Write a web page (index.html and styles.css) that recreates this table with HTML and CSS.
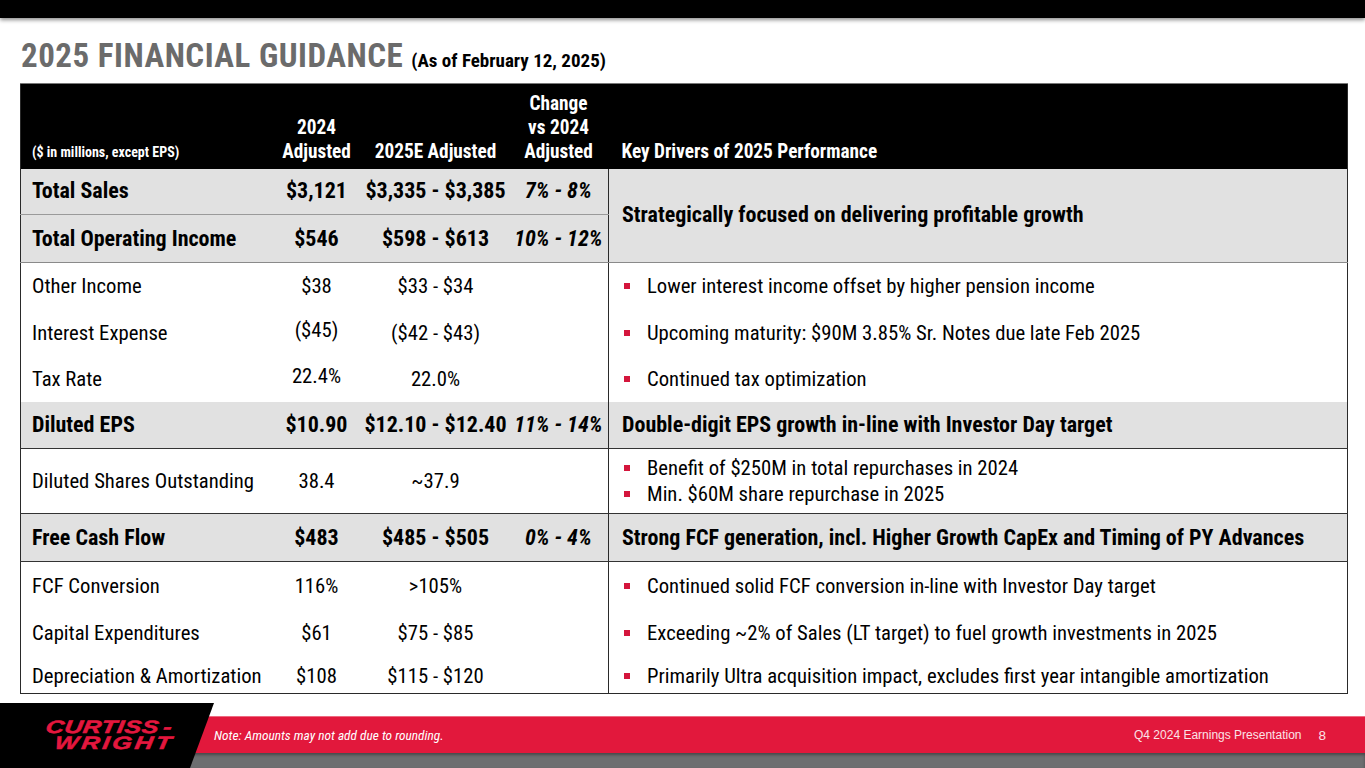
FILE: index.html
```html
<!DOCTYPE html>
<html lang="en">
<head>
<meta charset="utf-8">
<title>2025 Financial Guidance</title>
<link rel="stylesheet" href="styles.css">
</head>
<body>
<div class="slide">
  <div class="topbar"></div>
  <h1 class="title">2025 FINANCIAL GUIDANCE <span class="asof">(As of February 12, 2025)</span></h1>
  <table class="guide">
    <colgroup>
      <col class="c1"><col class="c2"><col class="c3"><col class="c4"><col class="c5">
    </colgroup>
    <thead>
      <tr>
        <th class="lbl"><span class="unit">($ in millions, except EPS)</span></th>
        <th>2024<br>Adjusted</th>
        <th>2025E Adjusted</th>
        <th>Change<br>vs 2024<br>Adjusted</th>
        <th class="drv">Key Drivers of 2025 Performance</th>
      </tr>
    </thead>
    <tbody>
      <tr class="hl r-ts">
        <td class="lbl">Total Sales</td><td>$3,121</td><td>$3,335 - $3,385</td><td class="pct">7% - 8%</td>
        <td class="drv strong" rowspan="2">Strategically focused on delivering profitable growth</td>
      </tr>
      <tr class="hl r-toi">
        <td class="lbl">Total Operating Income</td><td>$546</td><td>$598 - $613</td><td class="pct">10% - 12%</td>
      </tr>
      <tr class="r-oi">
        <td class="lbl">Other Income</td><td>$38</td><td>$33 - $34</td><td></td>
        <td class="drv"><ul class="bul"><li>Lower interest income offset by higher pension income</li></ul></td>
      </tr>
      <tr class="r-ie">
        <td class="lbl">Interest Expense</td><td><span class="up">($45)</span></td><td>($42 - $43)</td><td></td>
        <td class="drv"><ul class="bul"><li>Upcoming maturity: $90M 3.85% Sr. Notes due late Feb 2025</li></ul></td>
      </tr>
      <tr class="r-tr">
        <td class="lbl">Tax Rate</td><td><span class="up">22.4%</span></td><td>22.0%</td><td></td>
        <td class="drv"><ul class="bul"><li>Continued tax optimization</li></ul></td>
      </tr>
      <tr class="hl r-eps">
        <td class="lbl">Diluted EPS</td><td>$10.90</td><td>$12.10 - $12.40</td><td class="pct">11% - 14%</td>
        <td class="drv strong">Double-digit EPS growth in-line with Investor Day target</td>
      </tr>
      <tr class="r-dso">
        <td class="lbl">Diluted Shares Outstanding</td><td>38.4</td><td>~37.9</td><td></td>
        <td class="drv"><ul class="bul tight"><li>Benefit of $250M in total repurchases in 2024</li><li>Min. $60M share repurchase in 2025</li></ul></td>
      </tr>
      <tr class="hl r-fcf">
        <td class="lbl">Free Cash Flow</td><td>$483</td><td>$485 - $505</td><td class="pct">0% - 4%</td>
        <td class="drv strong">Strong FCF generation, incl. Higher Growth CapEx and Timing of PY Advances</td>
      </tr>
      <tr class="r-fcfc">
        <td class="lbl">FCF Conversion</td><td>116%</td><td>&gt;105%</td><td></td>
        <td class="drv"><ul class="bul"><li>Continued solid FCF conversion in-line with Investor Day target</li></ul></td>
      </tr>
      <tr class="r-cap">
        <td class="lbl">Capital Expenditures</td><td>$61</td><td>$75 - $85</td><td></td>
        <td class="drv"><ul class="bul"><li>Exceeding ~2% of Sales (LT target) to fuel growth investments in 2025</li></ul></td>
      </tr>
      <tr class="r-da">
        <td class="lbl">Depreciation &amp; Amortization</td><td>$108</td><td>$115 - $120</td><td></td>
        <td class="drv"><ul class="bul"><li>Primarily Ultra acquisition impact, excludes first year intangible amortization</li></ul></td>
      </tr>
    </tbody>
  </table>
  <footer class="footer">
    <div class="logo">
      <span class="logo-l1">CURTISS<span class="dash">-</span></span>
      <span class="logo-l2">WRIGHT</span>
    </div>
    <div class="band">
      <span class="note">Note: Amounts may not add due to rounding.</span>
      <span class="pres">Q4 2024 Earnings Presentation</span>
      <span class="page">8</span>
    </div>
    <div class="base"></div>
  </footer>
</div>
</body>
</html>
```

FILE: styles.css
```css
* { box-sizing: border-box; }
html, body { margin: 0; padding: 0; }
body {
  background: #ffffff;
  font-family: "Roboto", "Liberation Sans", Arial, sans-serif;
  font-stretch: 75%;
  color: #000;
}
.slide {
  position: relative;
  width: 1365px;
  height: 768px;
  overflow: hidden;
  display: flex;
  flex-direction: column;
}
.topbar {
  height: 18px;
  background: #000;
  box-shadow: 0 2px 4px rgba(0,0,0,0.45);
  flex: none;
}
.title {
  margin: 0;
  padding: 20px 0 0 21px;
  height: 65px;
  font-size: 33px;
  line-height: 36px;
  letter-spacing: 0.5px;
  font-weight: bold;
  color: #6b6b6b;
  flex: none;
}
.asof { font-size: 19px; color: #000; letter-spacing: 0; }
.guide {
  margin-left: 20px;
  width: 1327px;
  border-collapse: collapse;
  table-layout: fixed;
  border: 1.5px solid #2a2a2a;
  font-size: 20.7px;
  flex: none;
}
.c1 { width: 250px; }
.c2 { width: 92px; }
.c3 { width: 146px; }
.c4 { width: 100px; }
.c5 { width: 739px; }
.guide th {
  background: #000;
  color: #fff;
  font-size: 19.3px;
  font-weight: bold;
  line-height: 24px;
  vertical-align: bottom;
  text-align: center;
  padding: 0 0 5px 0;
  height: 85px;
  border-top: 1px solid #777;
}
.guide th.lbl { text-align: left; padding-left: 11px; }
.guide th.drv { text-align: left; padding-left: 13px; }
.unit { font-size: 14px; }
.guide td { text-align: center; padding: 0; line-height: 26px; white-space: nowrap; }
.guide td.lbl { text-align: left; padding-left: 11px; }
.guide td.drv { text-align: left; padding-left: 13px; border-left: 1.5px solid #2a2a2a; }
.guide td.strong { font-weight: bold; font-size: 22px; }
.hl td { background: #e1e1e1; font-weight: bold; font-size: 22px; }
.pct { font-style: italic; }
.up { position: relative; top: -3px; }
.r-ts td { height: 46px; border-bottom: 1px solid #9a9a9a; }
.r-toi td { height: 48px; border-bottom: 1px solid #8a8a8a; }
.r-ts td.drv { border-bottom: 1px solid #8a8a8a; }
.r-oi td { height: 47px; }
.r-ie td { height: 46px; }
.r-tr td { height: 46px; }
.r-eps td { height: 47px; border-bottom: 1.5px solid #333; }
.r-dso td { height: 65px; border-bottom: 1.5px solid #333; }
.r-fcf td { height: 48px; border-bottom: 1.5px solid #333; }
.r-fcfc td { height: 48px; }
.r-cap td { height: 46px; }
.r-da td { height: 38px; vertical-align: top; padding-top: 7px; }
.bul { list-style: none; margin: 0; padding: 0; }
.bul li { position: relative; padding-left: 25px; line-height: 26px; }
.bul li::before { content: ""; position: absolute; left: 2px; top: 10px; width: 6px; height: 6px; background: #d4163c; }
.footer { position: relative; margin-top: auto; height: 65px; flex: none; display: flex; flex-direction: column; }
.band { margin-top: 13px; height: 37px; background: #e2183c; border-top: 1px solid #ee6a80; display: flex; align-items: center; padding-left: 214px; padding-right: 39px; color: #fff; }
.note { font-style: italic; font-size: 13.4px; flex: 1; padding-top: 1px; }
.pres { font-family: "Liberation Sans", Arial, sans-serif; font-stretch: normal; font-size: 12px; color: #fbe3e7; margin-right: 17px; }
.page { font-family: "Liberation Sans", Arial, sans-serif; font-stretch: normal; font-size: 13.5px; color: #fbe3e7; }
.base { height: 15px; background: #6d6e70; box-shadow: inset 0 2px 3px rgba(0,0,0,0.35); }
.logo {
  position: absolute; left: 0; top: 0; width: 214px; height: 65px; background: #000;
  clip-path: polygon(0 0, 214px 0, 190px 65px, 0 65px);
  display: flex; flex-direction: column; align-items: flex-end; padding: 16px 42px 0 0; z-index: 2;
  font-family: "Liberation Sans", Arial, sans-serif; font-stretch: normal;
  font-weight: 900; font-style: italic; color: #e4173e; font-size: 18px; line-height: 16px; letter-spacing: 0.3px;
  -webkit-text-stroke: 0.5px #e4173e;
}
.logo-l1, .logo-l2 { display: block; transform: scaleX(1.4) skewX(-6deg); transform-origin: right center; }
.logo-l2 { letter-spacing: 2px; margin-right: -2px; }
.dash { margin-left: 3px; }
```
